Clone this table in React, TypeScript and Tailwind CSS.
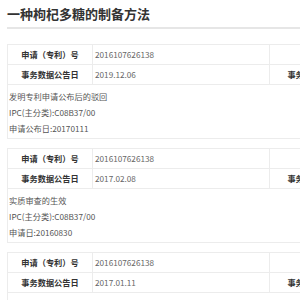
const records = [
  {
    no: "2016107626138",
    date: "2019.12.06",
    lines: ["发明专利申请公布后的驳回", "IPC(主分类):C08B37/00", "申请公布日:20170111"],
  },
  {
    no: "2016107626138",
    date: "2017.02.08",
    lines: ["实质审查的生效", "IPC(主分类):C08B37/00", "申请日:20160830"],
  },
  {
    no: "2016107626138",
    date: "2017.01.11",
    lines: ["发明专利申请公布", "IPC(主分类):C08B37/00", "申请公布日:20170111"],
  },
];

function Row({ label, value, extra }: { label: string; value: string; extra?: string }) {
  return (
    <div className="flex h-[20px] border-b border-[#ececec] leading-[19px]">
      <div className="w-[85px] shrink-0 border-r border-[#ececec] text-center font-bold text-[#333]">{label}</div>
      <div className="w-[177px] shrink-0 border-r border-[#ececec] pl-[2px] text-[#666]">{value}</div>
      <div className="w-[85px] shrink-0 border-r border-[#ececec] text-center font-bold text-[#333]">{extra ?? ""}</div>
      <div className="w-[150px] shrink-0" />
    </div>
  );
}

export default function App() {
  return (
    <div
      className="w-[300px] h-[300px] overflow-hidden bg-white pl-[7px]"
      style={{ fontFamily: '"Noto Sans CJK SC", "Noto Sans", sans-serif' }}
    >
      <div className="w-[520px]">
        <h1 className="h-[29px] border-b-2 border-[#e6e6e6] text-[13px] font-bold leading-[27px] text-[#333]">
          一种枸杞多糖的制备方法
        </h1>
        <div className="mt-[15px] flex flex-col gap-[9px] text-[8.2px]">
          {records.map((r, i) => (
            <div key={i} className="border border-[#ececec] bg-white">
              <Row label="申请（专利）号" value={r.no} />
              <Row label="事务数据公告日" value={r.date} extra="事务数据类型" />
              <div className="pl-[1px] pt-[3px] pb-[2px] leading-[16px] text-[#555]">
                {r.lines.map((l) => (
                  <div key={l}>{l}</div>
                ))}
              </div>
            </div>
          ))}
        </div>
      </div>
    </div>
  );
}
